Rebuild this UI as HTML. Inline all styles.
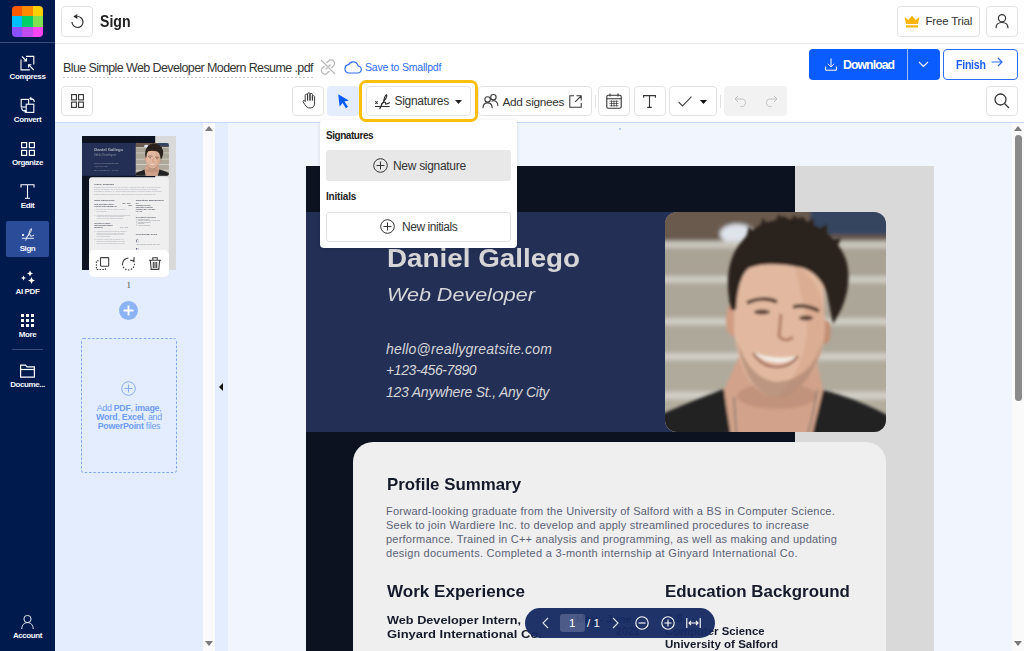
<!DOCTYPE html>
<html><head><meta charset="utf-8">
<style>
*{box-sizing:border-box;margin:0;padding:0}
html,body{width:1024px;height:651px;overflow:hidden;background:#fff;font-family:"Liberation Sans",sans-serif;position:relative}
.a{position:absolute}
.btn{position:absolute;border:1px solid #e3e3e3;border-radius:4px;background:#fff}
.ic{position:absolute;overflow:visible}
.sb-l{position:absolute;left:0;width:55px;text-align:center;color:#f4f6fb;font-size:8px;font-weight:bold;line-height:10px;white-space:nowrap;letter-spacing:-0.4px}
.t{position:absolute;white-space:nowrap}
.thumbpg .t{opacity:0.55}
.thumbpg .t[style*="bold"]{opacity:0.8}
</style></head><body>

<!-- SIDEBAR -->
<div class="a" style="left:0;top:0;width:55px;height:651px;background:#001a4d"></div>
<div class="a" style="left:0;top:42px;width:55px;height:1px;background:#3a4d78"></div>
<!-- logo -->
<div class="a" style="left:12px;top:6px;width:31px;height:31px;border-radius:4px;overflow:hidden;display:grid;grid-template-columns:10px 11px 10px;grid-template-rows:10px 11px 10px">
<i style="background:#ff5a00"></i><i style="background:#ff8a00"></i><i style="background:#ffd000"></i>
<i style="background:#00bfff"></i><i style="background:#00d068"></i><i style="background:#80e050"></i>
<i style="background:#8a50ff"></i><i style="background:#c04cf0"></i><i style="background:#ff44f4"></i>
</div>


<!-- compress -->
<svg class="ic" style="left:20px;top:55px" width="15" height="16" viewBox="0 0 15 16" fill="none" stroke="#fff" stroke-width="1.1">
<path d="M6 1.4H13.8V9.4"/><path d="M1 4.4V14.9H9.9"/><path d="M2 1.5L6.3 5.8M3.6 6H6.5V3.1"/><path d="M13.8 15L8.7 9.9M8.5 12.6V9.7H11.4"/>
</svg>
<div class="sb-l" style="top:72px">Compress</div>
<!-- convert -->
<svg class="ic" style="left:20px;top:96px" width="16" height="18" viewBox="0 0 16 18" fill="none" stroke="#fff" stroke-width="1.1">
<rect x="1.2" y="3.4" width="7.4" height="7.6"/><rect x="6.2" y="8.2" width="7.6" height="8.2" fill="#001a4d"/>
<path d="M11.2 1.2L10 2.6L11.4 3.8M10.2 2.6C12.5 2.6 14.3 3.5 14.3 6"/><path d="M4.8 16.6L6 15.2L4.6 14M5.8 15.2C3.5 15.2 1.7 14.3 1.7 11.8"/>
</svg>
<div class="sb-l" style="top:115px">Convert</div>
<!-- organize -->
<svg class="ic" style="left:21px;top:142px" width="14" height="14" viewBox="0 0 14 14" fill="none" stroke="#fff" stroke-width="1.2">
<rect x="0.6" y="0.6" width="5" height="5"/><rect x="8.4" y="0.6" width="5" height="5"/><rect x="0.6" y="8.4" width="5" height="5"/><rect x="8.4" y="8.4" width="5" height="5"/>
</svg>
<div class="sb-l" style="top:158px">Organize</div>
<!-- edit -->
<svg class="ic" style="left:20px;top:184px" width="15" height="15" viewBox="0 0 15 15" fill="none" stroke="#fff" stroke-width="1.1">
<path d="M1 3.5V0.8H14V3.5M7.5 0.8V14.2M5 14.2H10"/>
</svg>
<div class="sb-l" style="top:201px">Edit</div>
<!-- sign active -->
<div class="a" style="left:6px;top:221px;width:43px;height:36px;background:#2b4d99;border-radius:2px"></div>
<svg class="ic" style="left:21px;top:227.5px" width="14" height="14" viewBox="0 0 17 17" fill="none" stroke="#fff" stroke-width="1.1" stroke-linecap="round">
<path d="M1.5 12.5H15.2"/><path d="M1.6 7.6L3.4 9.4M3.4 7.6L1.6 9.4"/><path d="M9.6 7.2C10.3 4.2 11.3 1.2 12.2 0.8C13.3 0.4 13 3.5 10.6 6.2C8.8 8.3 7.2 11 5.8 14.8"/><path d="M7.6 10C9.2 7.8 12.2 7.3 11.6 9.4C11.2 10.6 12.6 10.2 15.5 8.8"/>
</svg>
<div class="sb-l" style="top:244px">Sign</div>
<!-- ai pdf -->
<svg class="ic" style="left:20px;top:270px" width="16" height="15" viewBox="0 0 16 15" fill="#fff">
<path d="M10 0.5L10.9 2.6L13 3.5L10.9 4.4L10 6.5L9.1 4.4L7 3.5L9.1 2.6Z"/>
<path d="M3.5 5.5L4.3 7.2L6 8L4.3 8.8L3.5 10.5L2.7 8.8L1 8L2.7 7.2Z"/>
<path d="M11.5 7L12.6 9.4L15 10.5L12.6 11.6L11.5 14L10.4 11.6L8 10.5L10.4 9.4Z"/>
</svg>
<div class="sb-l" style="top:287px">AI PDF</div>
<!-- more -->
<svg class="ic" style="left:21px;top:314px" width="13" height="13" viewBox="0 0 13 13" fill="#fff">
<rect x="0" y="0" width="3" height="3"/><rect x="5" y="0" width="3" height="3"/><rect x="10" y="0" width="3" height="3"/>
<rect x="0" y="5" width="3" height="3"/><rect x="5" y="5" width="3" height="3"/><rect x="10" y="5" width="3" height="3"/>
<rect x="0" y="10" width="3" height="3"/><rect x="5" y="10" width="3" height="3"/><rect x="10" y="10" width="3" height="3"/>
</svg>
<div class="sb-l" style="top:330px">More</div>
<div class="a" style="left:12px;top:349px;width:31px;height:1px;background:#3a4d78"></div>
<!-- documents -->
<svg class="ic" style="left:20px;top:364px" width="15" height="14" viewBox="0 0 15 14" fill="none" stroke="#fff" stroke-width="1.2">
<path d="M0.6 1.2H5.5L7 2.8H14.4V13.2H0.6Z"/><path d="M0.6 5.5H14.4"/>
</svg>
<div class="sb-l" style="top:380px;font-size:8px">Docume...</div>
<!-- account -->
<svg class="ic" style="left:20px;top:613px" width="15" height="16" viewBox="0 0 15 16" fill="none" stroke="#e6e9f0" stroke-width="1">
<circle cx="7.5" cy="6" r="3.6"/><path d="M1.8 16C1.8 12 4.2 9.6 7.5 9.6S13.2 12 13.2 16"/>
</svg>
<div class="sb-l" style="top:631px">Account</div>


<!-- HEADER -->
<div class="a" style="left:55px;top:43px;width:969px;height:1px;background:#e9e9e9"></div>
<div class="btn" style="left:61px;top:6px;width:32px;height:31px"></div>
<svg class="ic" style="left:69px;top:13px" width="16" height="16" viewBox="0 0 16 16" fill="none" stroke="#2a2a2a" stroke-width="1.2">
<path d="M8.3 3.5A5.5 5.5 0 1 1 3 9"/><path d="M4.3 3.5L8.3 1V6Z" fill="#2a2a2a" stroke="none"/>
</svg>
<div class="t" style="left:99.8px;top:12.2px;font-size:16.4px;font-weight:bold;color:#222;transform:scaleX(0.86);transform-origin:0 0">Sign</div>
<div class="btn" style="left:897px;top:6px;width:83px;height:31px"></div>
<svg class="ic" style="left:904px;top:15px" width="16" height="13" viewBox="0 0 16 13" fill="#f7b500">
<path d="M0.5 2L4.5 5L8 0.5L11.5 5L15.5 2L14 9H2Z"/><rect x="2" y="10.3" width="12" height="2.2"/>
</svg>
<div class="t" style="left:925.5px;top:15px;font-size:11.5px;color:#333;letter-spacing:-0.2px">Free Trial</div>
<div class="btn" style="left:986px;top:6px;width:32px;height:31px"></div>
<svg class="ic" style="left:995px;top:13px" width="14" height="16" viewBox="0 0 14 16" fill="none" stroke="#333" stroke-width="1.2">
<circle cx="7" cy="5.3" r="3.6"/><path d="M1 15.2C1 11.5 3.5 9.5 7 9.5S13 11.5 13 15.2"/>
</svg>

<!-- ROW 2 -->
<div class="t" style="left:63px;top:60.7px;font-size:12.5px;color:#333;letter-spacing:-0.6px">Blue Simple Web Developer Modern Resume .pdf</div>
<div class="a" style="left:63px;top:76.5px;width:250px;height:1.2px;background:repeating-linear-gradient(90deg,#c8c8c8 0 2px,transparent 2px 4px)"></div>
<svg class="ic" style="left:320px;top:59px" width="16" height="16" viewBox="0 0 16 16" fill="none" stroke="#b8b8b8" stroke-width="1.2">
<path d="M6.5 4L8.5 2A3 3 0 0 1 13.5 7L11.5 9M9.5 12L7.5 14A3 3 0 0 1 2.5 9L4.5 7M5.5 10.5L10.5 5.5M1 1L15 15"/>
</svg>
<svg class="ic" style="left:344px;top:60px" width="18" height="14" viewBox="0 0 18 14" fill="none" stroke="#2e6cf6" stroke-width="1.2">
<path d="M4.5 13H13.5A3.6 3.6 0 0 0 14 5.8A5 5 0 0 0 4.6 4.7A4.2 4.2 0 0 0 4.5 13Z"/>
</svg>
<div class="t" style="left:365px;top:61px;font-size:10.5px;color:#2e6cf6;letter-spacing:-0.2px">Save to Smallpdf</div>

<!-- download -->
<div class="a" style="left:809px;top:49px;width:131px;height:30.5px;background:#0b5cff;border-radius:4px"></div>
<div class="a" style="left:907px;top:49px;width:1px;height:30.5px;background:#9dbcff"></div>
<svg class="ic" style="left:824.5px;top:58px" width="12" height="13" viewBox="0 0 12 13" fill="none" stroke="#fff" stroke-width="1">
<path d="M6 0.5V9M2.8 5.8L6 9L9.2 5.8M0.6 8.5V12.2H11.4V8.5"/>
</svg>
<div class="t" style="left:843px;top:58px;font-size:12.3px;font-weight:bold;color:#fff;letter-spacing:-0.95px">Download</div>
<svg class="ic" style="left:918px;top:61px" width="11" height="7" viewBox="0 0 11 7" fill="none" stroke="#fff" stroke-width="1.1">
<path d="M1 1L5.5 5.5L10 1"/>
</svg>
<div class="a" style="left:943px;top:49px;width:75px;height:30.5px;border:1px solid #2e6cf6;border-radius:4px;background:#fff"></div>
<div class="t" style="left:956px;top:58px;font-size:12.3px;font-weight:bold;color:#1f5ef0;letter-spacing:-0.3px;transform:scaleX(0.86);transform-origin:0 0">Finish</div>
<svg class="ic" style="left:991px;top:57px" width="12" height="10" viewBox="0 0 12 10" fill="none" stroke="#2e6cf6" stroke-width="1.2">
<path d="M0.5 5H11M7 1L11 5L7 9"/>
</svg>

<!-- TOOLBAR -->
<div class="btn" style="left:61px;top:86px;width:32px;height:30px"></div>
<svg class="ic" style="left:71px;top:94px" width="13" height="14" viewBox="0 0 13 14" fill="none" stroke="#333" stroke-width="1.1">
<rect x="0.6" y="0.6" width="4.8" height="5.3"/><rect x="7.6" y="0.6" width="4.8" height="5.3"/><rect x="0.6" y="8.1" width="4.8" height="5.3"/><rect x="7.6" y="8.1" width="4.8" height="5.3"/>
</svg>

<div class="btn" style="left:292px;top:86px;width:32px;height:30px"></div>
<svg class="ic" style="left:301px;top:92px" width="15" height="17" viewBox="0 0 15 17" fill="none" stroke="#3a3a3a" stroke-width="1" stroke-linejoin="round">
<path d="M4.2 9.5V3.4A1.2 1.2 0 0 1 6.6 3.4V8.5M6.6 8.5V2A1.2 1.2 0 0 1 9 2V8.5M9 8.5V2.6A1.2 1.2 0 0 1 11.4 2.6V8.5M11.4 8.5V4.4A1.2 1.2 0 0 1 13.6 4.4V11C13.6 14.3 11.8 16 9.2 16C6.8 16 5.2 15 3.8 12.6L2 9.6A1 1 0 0 1 3.6 8.7L4.2 9.6"/>
</svg>
<div class="a" style="left:327px;top:86px;width:32px;height:30px;background:#e4edfd;border-radius:4px"></div>
<svg class="ic" style="left:337px;top:93px" width="13" height="16" viewBox="0 0 13 16" fill="#0b5cff">
<path d="M1.2 1.2L11.8 7.4L7.4 8.6L11 13.8L8.9 15.2L5.6 10.1L2.6 13.4Z"/>
</svg>

<div class="btn" style="left:366px;top:86px;width:105px;height:30px"></div>
<svg class="ic" style="left:374px;top:93px" width="17" height="17" viewBox="0 0 17 17" fill="none" stroke="#2a2a2a" stroke-width="1.1" stroke-linecap="round">
<path d="M1.5 13.5H15.2"/><path d="M1.6 8.6L3.4 10.4M3.4 8.6L1.6 10.4"/><path d="M9.6 8.2C10.3 5.2 11.3 2.2 12.2 1.8C13.3 1.4 13 4.5 10.6 7.2C8.8 9.3 7.2 12 5.8 15.8"/><path d="M7.6 11C9.2 8.8 12.2 8.3 11.6 10.4C11.2 11.6 12.6 11.2 15.5 9.8"/>
</svg>
<div class="t" style="left:394.5px;top:94px;font-size:12px;color:#333;letter-spacing:-0.3px">Signatures</div>
<svg class="ic" style="left:454.5px;top:99.5px" width="7" height="4" viewBox="0 0 7 4" fill="#222"><path d="M0 0H7L3.5 4Z"/></svg>

<div class="btn" style="left:478px;top:86px;width:114px;height:30px"></div>
<svg class="ic" style="left:482px;top:93px" width="17" height="16" viewBox="0 0 17 16" fill="none" stroke="#3a3a3a" stroke-width="1.1">
<circle cx="5.6" cy="6.4" r="2.7"/><circle cx="11.4" cy="4.2" r="2.7"/><path d="M1 15.2C1 11.6 2.8 9.9 5.6 9.9S10.2 11.6 10.2 15.2M9.6 8.2C10.1 7.9 10.7 7.7 11.4 7.7C14.2 7.7 15.9 9.6 15.9 13"/>
</svg>
<div class="t" style="left:502.5px;top:94.5px;font-size:11.8px;color:#333;letter-spacing:-0.3px">Add signees</div>
<svg class="ic" style="left:569px;top:95px" width="13" height="13" viewBox="0 0 13 13" fill="none" stroke="#3a3a3a" stroke-width="1.1">
<path d="M5 0.8H0.8V12.2H12.2V8M7.5 0.8H12.2V5.5M12.2 0.8L6.2 6.8"/>
</svg>
<div class="a" style="left:595px;top:95px;width:1px;height:13px;background:#e3e3e3"></div>
<div class="btn" style="left:598px;top:86px;width:32px;height:30px"></div>
<svg class="ic" style="left:606px;top:93px" width="16" height="16" viewBox="0 0 16 16" fill="none" stroke="#333" stroke-width="1.1">
<rect x="0.8" y="2.3" width="14.4" height="12.9" rx="1.5"/><path d="M0.8 5.8H15.2M4 0.5V3.5M12 0.5V3.5"/>
<path d="M3.5 8.3H12.5M3.5 10.5H12.5M3.5 12.7H12.5M5.5 7.5V13.5M8 7.5V13.5M10.5 7.5V13.5" stroke-width="0.7"/>
</svg>
<div class="btn" style="left:634px;top:86px;width:32px;height:30px"></div>
<svg class="ic" style="left:643px;top:95px" width="13" height="13" viewBox="0 0 13 13" fill="none" stroke="#333" stroke-width="1.1">
<path d="M0.6 2.8V0.6H12.4V2.8M6.5 0.6V12.4M4.2 12.4H8.8"/>
</svg>
<div class="btn" style="left:669px;top:86px;width:48px;height:30px"></div>
<svg class="ic" style="left:677.5px;top:95.5px" width="14" height="11" viewBox="0 0 14 11" fill="none" stroke="#444" stroke-width="1.1">
<path d="M0.6 6L4.5 10L13.5 0.6"/>
</svg>
<svg class="ic" style="left:700px;top:99.5px" width="7" height="4" viewBox="0 0 7 4" fill="#111"><path d="M0 0H7L3.5 4Z"/></svg>
<div class="a" style="left:720px;top:95px;width:1px;height:13px;background:#e3e3e3"></div>
<div class="a" style="left:724px;top:86px;width:63px;height:30px;background:#f2f2f2;border-radius:4px"></div>
<svg class="ic" style="left:733.5px;top:95px" width="14" height="12" viewBox="0 0 14 12" fill="none" stroke="#c2c2c2" stroke-width="1">
<path d="M1 4H9A4 4 0 0 1 9 11.5H6.5M4 1L1 4L4 7"/>
</svg>
<svg class="ic" style="left:764px;top:95px" width="14" height="12" viewBox="0 0 14 12" fill="none" stroke="#c2c2c2" stroke-width="1">
<path d="M13 4H5A4 4 0 0 0 5 11.5H7.5M10 1L13 4L10 7"/>
</svg>
<div class="btn" style="left:986px;top:86px;width:32px;height:30px"></div>
<svg class="ic" style="left:994px;top:93px" width="16" height="16" viewBox="0 0 16 16" fill="none" stroke="#333" stroke-width="1.3">
<circle cx="6.5" cy="6.5" r="5.5"/><path d="M10.5 10.5L15 15"/>
</svg>


<!-- CONTENT -->
<div class="a" style="left:55px;top:122px;width:969px;height:529px;background:#f0f5fe"></div>
<div class="a" style="left:55px;top:122px;width:969px;height:1px;background:#c8daf9"></div>
<div class="a" style="left:55px;top:123px;width:148px;height:528px;background:#e3edfd"></div>
<div class="a" style="left:203px;top:123px;width:12px;height:528px;background:#fafafa"></div>
<svg class="ic" style="left:205px;top:126px" width="8" height="5" viewBox="0 0 8 5" fill="#7a7a7a"><path d="M0 5H8L4 0Z"/></svg>
<svg class="ic" style="left:205px;top:641px" width="8" height="5" viewBox="0 0 8 5" fill="#7a7a7a"><path d="M0 0H8L4 5Z"/></svg>
<div class="a" style="left:215px;top:123px;width:13px;height:528px;background:#e3edfd"></div>
<svg class="ic" style="left:219px;top:383px" width="4" height="8" viewBox="0 0 4 8" fill="#111"><path d="M4 0V8L0 4Z"/></svg>
<!-- right scrollbar -->
<div class="a" style="left:1012px;top:123px;width:12px;height:528px;background:#fafafa"></div>
<svg class="ic" style="left:1014px;top:126px" width="8" height="5" viewBox="0 0 8 5" fill="#7a7a7a"><path d="M0 5H8L4 0Z"/></svg>
<svg class="ic" style="left:1014px;top:641px" width="8" height="5" viewBox="0 0 8 5" fill="#7a7a7a"><path d="M0 0H8L4 5Z"/></svg>
<div class="a" style="left:1015px;top:135px;width:7px;height:266px;background:#8a8a8a;border-radius:4px"></div>


<!-- DOCUMENT -->
<div class="a" style="left:227px;top:123px;width:785px;height:528px;overflow:hidden">
<div class="a" style="left:79px;top:43px;width:628px;height:895px">
<div class="a" style="left:0;top:0;width:628px;height:895px;background:#d9d9d9"></div><div class="a" style="left:0;top:0;width:489px;height:895px;background:#0d1220"></div><div class="a" style="left:0;top:46px;width:489px;height:220px;background:#232f55"></div><svg class="a" style="left:359px;top:46px" width="221" height="220" viewBox="0 0 221 220">
<defs>
<clipPath id="pcm"><rect x="0" y="0" width="221" height="220" rx="12"/></clipPath>
<filter id="blm" x="-10%" y="-10%" width="120%" height="120%"><feGaussianBlur stdDeviation="2.2"/></filter>
<filter id="bsm" x="-10%" y="-10%" width="120%" height="120%"><feGaussianBlur stdDeviation="1.4"/></filter>
</defs>
<g clip-path="url(#pcm)">
<rect width="221" height="220" fill="#aaa496"/>
<g filter="url(#blm)">
<rect x="-5" y="-5" width="231" height="34" fill="#6a5a4e"/>
<rect x="145" y="-5" width="85" height="28" fill="#34445f"/>
<ellipse cx="72" cy="22" rx="17" ry="10" fill="#dfe3ea"/>
<rect x="-5" y="29" width="231" height="7" fill="#c9c6bd"/>
<rect x="-5" y="36" width="231" height="28" fill="#a9a395"/>
<rect x="-5" y="64" width="231" height="7" fill="#cecbc3"/>
<rect x="-5" y="71" width="231" height="35" fill="#aca698"/>
<rect x="-5" y="106" width="231" height="7" fill="#d0cdc5"/>
<rect x="-5" y="113" width="231" height="28" fill="#aea89a"/>
<rect x="-5" y="141" width="231" height="7" fill="#d1cec6"/>
<rect x="-5" y="148" width="231" height="32" fill="#b0aa9c"/>
<rect x="-5" y="180" width="231" height="7" fill="#d2cfc7"/>
<rect x="-5" y="187" width="231" height="40" fill="#b3ad9f"/>
</g>
<g filter="url(#bsm)">
<!-- neck -->
<path d="M76 140 L150 140 L158 178 L150 225 L64 225 L59 178 Z" fill="#d2a38a"/>
<ellipse cx="112" cy="184" rx="40" ry="13" fill="#b08068" opacity="0.45"/>
<!-- shirt -->
<path d="M-5 203 C10 196 40 184 59 177 C61 195 64 210 66 225 L147 225 C150 210 155 192 158 178 C170 181 200 190 226 205 L226 228 L-5 228 Z" fill="#232323"/>
<!-- necklace -->
<path d="M69 185 C70 200 70 212 72 225M152 178 C150 195 146 210 142 225" stroke="#6a6a6a" stroke-width="1.2" fill="none"/>
<!-- ears -->
<ellipse cx="67" cy="108" rx="6" ry="16" fill="#d09c82"/>
<ellipse cx="160" cy="120" rx="6" ry="12" fill="#c28e74"/>
<!-- face -->
<path d="M70 62 C75 45 150 45 158 65 L160 112 C160 145 145 178 112 186 C85 184 72 150 69 118 Z" fill="#e2b9a0"/>
<path d="M130 55 C150 62 160 85 160 115 C158 150 142 180 112 186 C132 165 142 140 142 110 Z" fill="#c99378" opacity="0.3"/>
<!-- stubble -->
<path d="M72 128 C78 165 95 186 112 186 C135 183 152 160 158 128 C150 155 135 168 112 170 C92 168 80 152 72 128 Z" fill="#a37e6b" opacity="0.6"/>
<!-- hair -->
<path d="M66 98 C60 70 62 45 78 28 C88 15 100 10 112 8 L118 4 L126 8 L138 5 L144 12 C160 16 172 28 180 45 C186 60 184 80 176 98 L168 112 L162 82 C158 70 150 60 138 56 C120 52 100 50 84 56 C76 62 72 78 71 98 Z" fill="#2c201a"/>
<path d="M80 30L84 14L92 24L98 6L106 18L114 2L120 14L130 3L136 16L148 6L150 20L162 12L162 28L176 26L170 40Z" fill="#2c201a"/>
<!-- brows -->
<path d="M82 91 C92 86 104 86 112 90" stroke="#4a3428" stroke-width="3.5" fill="none"/>
<path d="M128 95 C136 93 146 95 154 99" stroke="#4a3428" stroke-width="3.5" fill="none"/>
<!-- eyes -->
<ellipse cx="97" cy="100" rx="8" ry="2.5" fill="#5a3e30"/>
<ellipse cx="141" cy="106" rx="7" ry="2.5" fill="#5a3e30"/>
<!-- nose -->
<path d="M116 102 L114 124 C117 129 124 129 128 125" stroke="#b07c62" stroke-width="3" fill="none"/>
<!-- mouth -->
<path d="M88 140 C100 152 122 154 132 144 C120 147 100 146 88 140 Z" fill="#f3eee8"/>
<path d="M88 141 C98 158 122 160 133 144" stroke="#8a5040" stroke-width="2" fill="none"/>
</g>
</g>
</svg><div class="t" style="left:81px;top:80.41px;font-size:25.5px;line-height:1;font-weight:bold;font-style:normal;color:#d6d6d9;letter-spacing:0px;transform:scaleX(1.09);transform-origin:0 0;">Daniel Gallego</div>
<div class="t" style="left:81px;top:118.92px;font-size:19px;line-height:1;font-weight:normal;font-style:italic;color:#d6d6d9;letter-spacing:0px;transform:scaleX(1.133);transform-origin:0 0;">Web Developer</div>
<div class="t" style="left:80px;top:176.15px;font-size:14px;line-height:1;font-weight:normal;font-style:italic;color:#d6d6d9;letter-spacing:0.19px;">hello@reallygreatsite.com</div>
<div class="t" style="left:80px;top:197.45px;font-size:14px;line-height:1;font-weight:normal;font-style:italic;color:#d6d6d9;letter-spacing:-0.4px;">+123-456-7890</div>
<div class="t" style="left:80px;top:218.95px;font-size:14px;line-height:1;font-weight:normal;font-style:italic;color:#d6d6d9;letter-spacing:-0.24px;">123 Anywhere St., Any City</div>
<div class="a" style="left:47px;top:276px;width:533px;height:640px;background:#efefef;border-radius:20px"></div><div class="t" style="left:81px;top:310.03px;font-size:16.5px;line-height:1;font-weight:bold;font-style:normal;color:#151a2a;letter-spacing:0px;transform:scaleX(1.022);transform-origin:0 0;">Profile Summary</div>
<div class="t" style="left:80px;top:340.09px;font-size:11px;line-height:1;font-weight:normal;font-style:normal;color:#5b6275;letter-spacing:0.245px;">Forward-looking graduate from the University of Salford with a BS in Computer Science.</div>
<div class="t" style="left:80px;top:353.99px;font-size:11px;line-height:1;font-weight:normal;font-style:normal;color:#5b6275;letter-spacing:0.22px;">Seek to join Wardiere Inc. to develop and apply streamlined procedures to increase</div>
<div class="t" style="left:80px;top:367.89px;font-size:11px;line-height:1;font-weight:normal;font-style:normal;color:#5b6275;letter-spacing:0.23px;">performance. Trained in C++ analysis and programming, as well as making and updating</div>
<div class="t" style="left:80px;top:381.79px;font-size:11px;line-height:1;font-weight:normal;font-style:normal;color:#5b6275;letter-spacing:0.29px;">design documents. Completed a 3-month internship at Ginyard International Co.</div>
<div class="t" style="left:81px;top:417.03px;font-size:16.5px;line-height:1;font-weight:bold;font-style:normal;color:#151a2a;letter-spacing:0px;transform:scaleX(1.033);transform-origin:0 0;">Work Experience</div>
<div class="t" style="left:359px;top:417.03px;font-size:16.5px;line-height:1;font-weight:bold;font-style:normal;color:#151a2a;letter-spacing:0px;transform:scaleX(1.024);transform-origin:0 0;">Education Background</div>
<div class="t" style="left:81px;top:449.23px;font-size:11.3px;line-height:1;font-weight:bold;font-style:normal;color:#151a2a;letter-spacing:0px;transform:scaleX(1.125);transform-origin:0 0;">Web Developer Intern,</div>
<div class="t" style="left:81px;top:462.93px;font-size:11.3px;line-height:1;font-weight:bold;font-style:normal;color:#151a2a;letter-spacing:0px;transform:scaleX(1.148);transform-origin:0 0;">Ginyard International Co.</div>
<div class="t" style="left:270px;top:448.11px;font-size:10.5px;line-height:1;font-weight:bold;font-style:normal;color:#151a2a;letter-spacing:0px;transform:scaleX(1.02);transform-origin:0 0;">May - June</div>
<div class="t" style="left:309.5px;top:459.61px;font-size:10.5px;line-height:1;font-weight:bold;font-style:normal;color:#151a2a;letter-spacing:0px;transform:scaleX(1.02);transform-origin:0 0;">2021</div>
<div class="t" style="left:359px;top:447.11px;font-size:10.5px;line-height:1;font-weight:bold;font-style:normal;color:#151a2a;letter-spacing:0.3px;">B.S.</div>
<div class="t" style="left:359px;top:459.99px;font-size:11px;line-height:1;font-weight:bold;font-style:normal;color:#151a2a;letter-spacing:0px;transform:scaleX(1.03);transform-origin:0 0;">Computer Science</div>
<div class="t" style="left:359px;top:472.89px;font-size:11px;line-height:1;font-weight:bold;font-style:normal;color:#151a2a;letter-spacing:0px;transform:scaleX(1.05);transform-origin:0 0;">University of Salford</div>
<div class="t" style="left:359px;top:487.54px;font-size:10px;line-height:1;font-weight:bold;font-style:normal;color:#151a2a;letter-spacing:0px;">September 2017 - May 2021</div>
<div class="t" style="left:359px;top:499.54px;font-size:10px;line-height:1;font-weight:bold;font-style:normal;color:#151a2a;letter-spacing:0px;">GPA: 3.8</div>
<div class="a" style="left:85px;top:492px;width:4px;height:4px;border-radius:50%;background:#5b6275"></div><div class="t" style="left:97px;top:488.96px;font-size:9.5px;line-height:1;font-weight:normal;font-style:normal;color:#5b6275;letter-spacing:0px;">Developed and tested 10 features of customer</div>
<div class="t" style="left:97px;top:500.96px;font-size:9.5px;line-height:1;font-weight:normal;font-style:normal;color:#5b6275;letter-spacing:0px;">web applications</div>
<div class="a" style="left:85px;top:527px;width:4px;height:4px;border-radius:50%;background:#5b6275"></div><div class="t" style="left:97px;top:523.96px;font-size:9.5px;line-height:1;font-weight:normal;font-style:normal;color:#5b6275;letter-spacing:0px;">Collaborated with the development and design teams</div>
<div class="t" style="left:97px;top:535.96px;font-size:9.5px;line-height:1;font-weight:normal;font-style:normal;color:#5b6275;letter-spacing:0px;">to build efficient user interfaces and improve</div>
<div class="t" style="left:97px;top:547.96px;font-size:9.5px;line-height:1;font-weight:normal;font-style:normal;color:#5b6275;letter-spacing:0px;">experience for better website performance</div>
<div class="t" style="left:81px;top:580.69px;font-size:11px;line-height:1;font-weight:bold;font-style:normal;color:#151a2a;letter-spacing:0px;">University of Salford</div>
<div class="t" style="left:81px;top:592.69px;font-size:11px;line-height:1;font-weight:bold;font-style:normal;color:#151a2a;letter-spacing:0px;">Undergraduate Student</div>
<div class="t" style="left:81px;top:604.69px;font-size:11px;line-height:1;font-weight:bold;font-style:normal;color:#151a2a;letter-spacing:0px;">Researcher</div>
<div class="t" style="left:255px;top:605.53px;font-size:10px;line-height:1;font-weight:normal;font-style:normal;color:#151a2a;letter-spacing:0px;">2019 - 2020</div>
<div class="a" style="left:85px;top:635px;width:4px;height:4px;border-radius:50%;background:#5b6275"></div><div class="t" style="left:97px;top:631.96px;font-size:9.5px;line-height:1;font-weight:normal;font-style:normal;color:#5b6275;letter-spacing:0px;">Assisted professors with conducting research on</div>
<div class="t" style="left:97px;top:643.96px;font-size:9.5px;line-height:1;font-weight:normal;font-style:normal;color:#5b6275;letter-spacing:0px;">customer experience, developing data-driven</div>
<div class="t" style="left:97px;top:655.96px;font-size:9.5px;line-height:1;font-weight:normal;font-style:normal;color:#5b6275;letter-spacing:0px;">programs, and producing reports for faculty</div>
<div class="t" style="left:97px;top:667.96px;font-size:9.5px;line-height:1;font-weight:normal;font-style:normal;color:#5b6275;letter-spacing:0px;">review and publication</div>
<div class="a" style="left:85px;top:690px;width:4px;height:4px;border-radius:50%;background:#5b6275"></div><div class="t" style="left:97px;top:686.96px;font-size:9.5px;line-height:1;font-weight:normal;font-style:normal;color:#5b6275;letter-spacing:0px;">Conducted research and data analysis for a</div>
<div class="t" style="left:97px;top:698.96px;font-size:9.5px;line-height:1;font-weight:normal;font-style:normal;color:#5b6275;letter-spacing:0px;">team project, presenting findings to the class</div>
<div class="t" style="left:97px;top:710.96px;font-size:9.5px;line-height:1;font-weight:normal;font-style:normal;color:#5b6275;letter-spacing:0px;">and receiving the highest grade in the course</div>
<div class="t" style="left:359px;top:534.30px;font-size:15px;line-height:1;font-weight:bold;font-style:normal;color:#151a2a;letter-spacing:0.5px;">Relevant Courses</div>
<div class="a" style="left:364px;top:556px;width:3px;height:3px;border-radius:50%;background:#151a2a"></div><div class="t" style="left:372px;top:552.96px;font-size:9.5px;line-height:1;font-weight:normal;font-style:normal;color:#151a2a;letter-spacing:0px;">Web Development</div>
<div class="a" style="left:364px;top:566px;width:3px;height:3px;border-radius:50%;background:#151a2a"></div><div class="t" style="left:372px;top:562.96px;font-size:9.5px;line-height:1;font-weight:normal;font-style:normal;color:#151a2a;letter-spacing:0px;">Database Design and Management</div>
<div class="a" style="left:364px;top:576px;width:3px;height:3px;border-radius:50%;background:#151a2a"></div><div class="t" style="left:372px;top:572.96px;font-size:9.5px;line-height:1;font-weight:normal;font-style:normal;color:#151a2a;letter-spacing:0px;">Algorithms and Data</div>
<div class="a" style="left:364px;top:586px;width:3px;height:3px;border-radius:50%;background:#151a2a"></div><div class="t" style="left:372px;top:582.96px;font-size:9.5px;line-height:1;font-weight:normal;font-style:normal;color:#151a2a;letter-spacing:0px;">Structures</div>
<div class="a" style="left:364px;top:596px;width:3px;height:3px;border-radius:50%;background:#151a2a"></div><div class="t" style="left:372px;top:592.96px;font-size:9.5px;line-height:1;font-weight:normal;font-style:normal;color:#151a2a;letter-spacing:0px;">Artificial Intelligence</div>
<div class="t" style="left:359px;top:649.30px;font-size:15px;line-height:1;font-weight:bold;font-style:normal;color:#151a2a;letter-spacing:0.5px;">Professional Skills</div>
<div class="a" style="left:359px;top:690px;width:22px;height:22px;border-radius:50%;border:4px solid #232f55;border-right-color:#c9ccd6"></div><div class="t" style="left:359px;top:722.96px;font-size:9.5px;line-height:1;font-weight:normal;font-style:normal;color:#151a2a;letter-spacing:0px;">Adobe Illustrator   Microsoft Office Suite</div>
<div class="a" style="left:359px;top:745px;width:22px;height:22px;border-radius:50%;border:4px solid #232f55;border-right-color:#c9ccd6"></div>
</div>
</div>
<!-- THUMB -->
<div class="a" style="left:82px;top:136px;width:94px;height:134px;overflow:hidden">
<div class="a thumbpg" style="left:0;top:0;width:628px;height:895px;transform:scale(0.1497);transform-origin:0 0">
<div class="a" style="left:0;top:0;width:628px;height:895px;background:#d9d9d9"></div><div class="a" style="left:0;top:0;width:489px;height:895px;background:#0d1220"></div><div class="a" style="left:0;top:46px;width:489px;height:220px;background:#232f55"></div><svg class="a" style="left:359px;top:46px" width="221" height="220" viewBox="0 0 221 220">
<defs>
<clipPath id="pct"><rect x="0" y="0" width="221" height="220" rx="12"/></clipPath>
<filter id="blt" x="-10%" y="-10%" width="120%" height="120%"><feGaussianBlur stdDeviation="2.2"/></filter>
<filter id="bst" x="-10%" y="-10%" width="120%" height="120%"><feGaussianBlur stdDeviation="1.4"/></filter>
</defs>
<g clip-path="url(#pct)">
<rect width="221" height="220" fill="#aaa496"/>
<g filter="url(#blt)">
<rect x="-5" y="-5" width="231" height="34" fill="#6a5a4e"/>
<rect x="145" y="-5" width="85" height="28" fill="#34445f"/>
<ellipse cx="72" cy="22" rx="17" ry="10" fill="#dfe3ea"/>
<rect x="-5" y="29" width="231" height="7" fill="#c9c6bd"/>
<rect x="-5" y="36" width="231" height="28" fill="#a9a395"/>
<rect x="-5" y="64" width="231" height="7" fill="#cecbc3"/>
<rect x="-5" y="71" width="231" height="35" fill="#aca698"/>
<rect x="-5" y="106" width="231" height="7" fill="#d0cdc5"/>
<rect x="-5" y="113" width="231" height="28" fill="#aea89a"/>
<rect x="-5" y="141" width="231" height="7" fill="#d1cec6"/>
<rect x="-5" y="148" width="231" height="32" fill="#b0aa9c"/>
<rect x="-5" y="180" width="231" height="7" fill="#d2cfc7"/>
<rect x="-5" y="187" width="231" height="40" fill="#b3ad9f"/>
</g>
<g filter="url(#bst)">
<!-- neck -->
<path d="M76 140 L150 140 L158 178 L150 225 L64 225 L59 178 Z" fill="#d2a38a"/>
<ellipse cx="112" cy="184" rx="40" ry="13" fill="#b08068" opacity="0.45"/>
<!-- shirt -->
<path d="M-5 203 C10 196 40 184 59 177 C61 195 64 210 66 225 L147 225 C150 210 155 192 158 178 C170 181 200 190 226 205 L226 228 L-5 228 Z" fill="#232323"/>
<!-- necklace -->
<path d="M69 185 C70 200 70 212 72 225M152 178 C150 195 146 210 142 225" stroke="#6a6a6a" stroke-width="1.2" fill="none"/>
<!-- ears -->
<ellipse cx="67" cy="108" rx="6" ry="16" fill="#d09c82"/>
<ellipse cx="160" cy="120" rx="6" ry="12" fill="#c28e74"/>
<!-- face -->
<path d="M70 62 C75 45 150 45 158 65 L160 112 C160 145 145 178 112 186 C85 184 72 150 69 118 Z" fill="#e2b9a0"/>
<path d="M130 55 C150 62 160 85 160 115 C158 150 142 180 112 186 C132 165 142 140 142 110 Z" fill="#c99378" opacity="0.3"/>
<!-- stubble -->
<path d="M72 128 C78 165 95 186 112 186 C135 183 152 160 158 128 C150 155 135 168 112 170 C92 168 80 152 72 128 Z" fill="#a37e6b" opacity="0.6"/>
<!-- hair -->
<path d="M66 98 C60 70 62 45 78 28 C88 15 100 10 112 8 L118 4 L126 8 L138 5 L144 12 C160 16 172 28 180 45 C186 60 184 80 176 98 L168 112 L162 82 C158 70 150 60 138 56 C120 52 100 50 84 56 C76 62 72 78 71 98 Z" fill="#2c201a"/>
<path d="M80 30L84 14L92 24L98 6L106 18L114 2L120 14L130 3L136 16L148 6L150 20L162 12L162 28L176 26L170 40Z" fill="#2c201a"/>
<!-- brows -->
<path d="M82 91 C92 86 104 86 112 90" stroke="#4a3428" stroke-width="3.5" fill="none"/>
<path d="M128 95 C136 93 146 95 154 99" stroke="#4a3428" stroke-width="3.5" fill="none"/>
<!-- eyes -->
<ellipse cx="97" cy="100" rx="8" ry="2.5" fill="#5a3e30"/>
<ellipse cx="141" cy="106" rx="7" ry="2.5" fill="#5a3e30"/>
<!-- nose -->
<path d="M116 102 L114 124 C117 129 124 129 128 125" stroke="#b07c62" stroke-width="3" fill="none"/>
<!-- mouth -->
<path d="M88 140 C100 152 122 154 132 144 C120 147 100 146 88 140 Z" fill="#f3eee8"/>
<path d="M88 141 C98 158 122 160 133 144" stroke="#8a5040" stroke-width="2" fill="none"/>
</g>
</g>
</svg><div class="t" style="left:81px;top:80.41px;font-size:25.5px;line-height:1;font-weight:bold;font-style:normal;color:#d6d6d9;letter-spacing:0px;transform:scaleX(1.09);transform-origin:0 0;">Daniel Gallego</div>
<div class="t" style="left:81px;top:118.92px;font-size:19px;line-height:1;font-weight:normal;font-style:italic;color:#d6d6d9;letter-spacing:0px;transform:scaleX(1.133);transform-origin:0 0;">Web Developer</div>
<div class="t" style="left:80px;top:176.15px;font-size:14px;line-height:1;font-weight:normal;font-style:italic;color:#d6d6d9;letter-spacing:0.19px;">hello@reallygreatsite.com</div>
<div class="t" style="left:80px;top:197.45px;font-size:14px;line-height:1;font-weight:normal;font-style:italic;color:#d6d6d9;letter-spacing:-0.4px;">+123-456-7890</div>
<div class="t" style="left:80px;top:218.95px;font-size:14px;line-height:1;font-weight:normal;font-style:italic;color:#d6d6d9;letter-spacing:-0.24px;">123 Anywhere St., Any City</div>
<div class="a" style="left:47px;top:276px;width:533px;height:640px;background:#efefef;border-radius:20px"></div><div class="t" style="left:81px;top:310.03px;font-size:16.5px;line-height:1;font-weight:bold;font-style:normal;color:#151a2a;letter-spacing:0px;transform:scaleX(1.022);transform-origin:0 0;">Profile Summary</div>
<div class="t" style="left:80px;top:340.09px;font-size:11px;line-height:1;font-weight:normal;font-style:normal;color:#5b6275;letter-spacing:0.245px;">Forward-looking graduate from the University of Salford with a BS in Computer Science.</div>
<div class="t" style="left:80px;top:353.99px;font-size:11px;line-height:1;font-weight:normal;font-style:normal;color:#5b6275;letter-spacing:0.22px;">Seek to join Wardiere Inc. to develop and apply streamlined procedures to increase</div>
<div class="t" style="left:80px;top:367.89px;font-size:11px;line-height:1;font-weight:normal;font-style:normal;color:#5b6275;letter-spacing:0.23px;">performance. Trained in C++ analysis and programming, as well as making and updating</div>
<div class="t" style="left:80px;top:381.79px;font-size:11px;line-height:1;font-weight:normal;font-style:normal;color:#5b6275;letter-spacing:0.29px;">design documents. Completed a 3-month internship at Ginyard International Co.</div>
<div class="t" style="left:81px;top:417.03px;font-size:16.5px;line-height:1;font-weight:bold;font-style:normal;color:#151a2a;letter-spacing:0px;transform:scaleX(1.033);transform-origin:0 0;">Work Experience</div>
<div class="t" style="left:359px;top:417.03px;font-size:16.5px;line-height:1;font-weight:bold;font-style:normal;color:#151a2a;letter-spacing:0px;transform:scaleX(1.024);transform-origin:0 0;">Education Background</div>
<div class="t" style="left:81px;top:449.23px;font-size:11.3px;line-height:1;font-weight:bold;font-style:normal;color:#151a2a;letter-spacing:0px;transform:scaleX(1.125);transform-origin:0 0;">Web Developer Intern,</div>
<div class="t" style="left:81px;top:462.93px;font-size:11.3px;line-height:1;font-weight:bold;font-style:normal;color:#151a2a;letter-spacing:0px;transform:scaleX(1.148);transform-origin:0 0;">Ginyard International Co.</div>
<div class="t" style="left:270px;top:448.11px;font-size:10.5px;line-height:1;font-weight:bold;font-style:normal;color:#151a2a;letter-spacing:0px;transform:scaleX(1.02);transform-origin:0 0;">May - June</div>
<div class="t" style="left:309.5px;top:459.61px;font-size:10.5px;line-height:1;font-weight:bold;font-style:normal;color:#151a2a;letter-spacing:0px;transform:scaleX(1.02);transform-origin:0 0;">2021</div>
<div class="t" style="left:359px;top:447.11px;font-size:10.5px;line-height:1;font-weight:bold;font-style:normal;color:#151a2a;letter-spacing:0.3px;">B.S.</div>
<div class="t" style="left:359px;top:459.99px;font-size:11px;line-height:1;font-weight:bold;font-style:normal;color:#151a2a;letter-spacing:0px;transform:scaleX(1.03);transform-origin:0 0;">Computer Science</div>
<div class="t" style="left:359px;top:472.89px;font-size:11px;line-height:1;font-weight:bold;font-style:normal;color:#151a2a;letter-spacing:0px;transform:scaleX(1.05);transform-origin:0 0;">University of Salford</div>
<div class="t" style="left:359px;top:487.54px;font-size:10px;line-height:1;font-weight:bold;font-style:normal;color:#151a2a;letter-spacing:0px;">September 2017 - May 2021</div>
<div class="t" style="left:359px;top:499.54px;font-size:10px;line-height:1;font-weight:bold;font-style:normal;color:#151a2a;letter-spacing:0px;">GPA: 3.8</div>
<div class="a" style="left:85px;top:492px;width:4px;height:4px;border-radius:50%;background:#5b6275"></div><div class="t" style="left:97px;top:488.96px;font-size:9.5px;line-height:1;font-weight:normal;font-style:normal;color:#5b6275;letter-spacing:0px;">Developed and tested 10 features of customer</div>
<div class="t" style="left:97px;top:500.96px;font-size:9.5px;line-height:1;font-weight:normal;font-style:normal;color:#5b6275;letter-spacing:0px;">web applications</div>
<div class="a" style="left:85px;top:527px;width:4px;height:4px;border-radius:50%;background:#5b6275"></div><div class="t" style="left:97px;top:523.96px;font-size:9.5px;line-height:1;font-weight:normal;font-style:normal;color:#5b6275;letter-spacing:0px;">Collaborated with the development and design teams</div>
<div class="t" style="left:97px;top:535.96px;font-size:9.5px;line-height:1;font-weight:normal;font-style:normal;color:#5b6275;letter-spacing:0px;">to build efficient user interfaces and improve</div>
<div class="t" style="left:97px;top:547.96px;font-size:9.5px;line-height:1;font-weight:normal;font-style:normal;color:#5b6275;letter-spacing:0px;">experience for better website performance</div>
<div class="t" style="left:81px;top:580.69px;font-size:11px;line-height:1;font-weight:bold;font-style:normal;color:#151a2a;letter-spacing:0px;">University of Salford</div>
<div class="t" style="left:81px;top:592.69px;font-size:11px;line-height:1;font-weight:bold;font-style:normal;color:#151a2a;letter-spacing:0px;">Undergraduate Student</div>
<div class="t" style="left:81px;top:604.69px;font-size:11px;line-height:1;font-weight:bold;font-style:normal;color:#151a2a;letter-spacing:0px;">Researcher</div>
<div class="t" style="left:255px;top:605.53px;font-size:10px;line-height:1;font-weight:normal;font-style:normal;color:#151a2a;letter-spacing:0px;">2019 - 2020</div>
<div class="a" style="left:85px;top:635px;width:4px;height:4px;border-radius:50%;background:#5b6275"></div><div class="t" style="left:97px;top:631.96px;font-size:9.5px;line-height:1;font-weight:normal;font-style:normal;color:#5b6275;letter-spacing:0px;">Assisted professors with conducting research on</div>
<div class="t" style="left:97px;top:643.96px;font-size:9.5px;line-height:1;font-weight:normal;font-style:normal;color:#5b6275;letter-spacing:0px;">customer experience, developing data-driven</div>
<div class="t" style="left:97px;top:655.96px;font-size:9.5px;line-height:1;font-weight:normal;font-style:normal;color:#5b6275;letter-spacing:0px;">programs, and producing reports for faculty</div>
<div class="t" style="left:97px;top:667.96px;font-size:9.5px;line-height:1;font-weight:normal;font-style:normal;color:#5b6275;letter-spacing:0px;">review and publication</div>
<div class="a" style="left:85px;top:690px;width:4px;height:4px;border-radius:50%;background:#5b6275"></div><div class="t" style="left:97px;top:686.96px;font-size:9.5px;line-height:1;font-weight:normal;font-style:normal;color:#5b6275;letter-spacing:0px;">Conducted research and data analysis for a</div>
<div class="t" style="left:97px;top:698.96px;font-size:9.5px;line-height:1;font-weight:normal;font-style:normal;color:#5b6275;letter-spacing:0px;">team project, presenting findings to the class</div>
<div class="t" style="left:97px;top:710.96px;font-size:9.5px;line-height:1;font-weight:normal;font-style:normal;color:#5b6275;letter-spacing:0px;">and receiving the highest grade in the course</div>
<div class="t" style="left:359px;top:534.30px;font-size:15px;line-height:1;font-weight:bold;font-style:normal;color:#151a2a;letter-spacing:0.5px;">Relevant Courses</div>
<div class="a" style="left:364px;top:556px;width:3px;height:3px;border-radius:50%;background:#151a2a"></div><div class="t" style="left:372px;top:552.96px;font-size:9.5px;line-height:1;font-weight:normal;font-style:normal;color:#151a2a;letter-spacing:0px;">Web Development</div>
<div class="a" style="left:364px;top:566px;width:3px;height:3px;border-radius:50%;background:#151a2a"></div><div class="t" style="left:372px;top:562.96px;font-size:9.5px;line-height:1;font-weight:normal;font-style:normal;color:#151a2a;letter-spacing:0px;">Database Design and Management</div>
<div class="a" style="left:364px;top:576px;width:3px;height:3px;border-radius:50%;background:#151a2a"></div><div class="t" style="left:372px;top:572.96px;font-size:9.5px;line-height:1;font-weight:normal;font-style:normal;color:#151a2a;letter-spacing:0px;">Algorithms and Data</div>
<div class="a" style="left:364px;top:586px;width:3px;height:3px;border-radius:50%;background:#151a2a"></div><div class="t" style="left:372px;top:582.96px;font-size:9.5px;line-height:1;font-weight:normal;font-style:normal;color:#151a2a;letter-spacing:0px;">Structures</div>
<div class="a" style="left:364px;top:596px;width:3px;height:3px;border-radius:50%;background:#151a2a"></div><div class="t" style="left:372px;top:592.96px;font-size:9.5px;line-height:1;font-weight:normal;font-style:normal;color:#151a2a;letter-spacing:0px;">Artificial Intelligence</div>
<div class="t" style="left:359px;top:649.30px;font-size:15px;line-height:1;font-weight:bold;font-style:normal;color:#151a2a;letter-spacing:0.5px;">Professional Skills</div>
<div class="a" style="left:359px;top:690px;width:22px;height:22px;border-radius:50%;border:4px solid #232f55;border-right-color:#c9ccd6"></div><div class="t" style="left:359px;top:722.96px;font-size:9.5px;line-height:1;font-weight:normal;font-style:normal;color:#151a2a;letter-spacing:0px;">Adobe Illustrator   Microsoft Office Suite</div>
<div class="a" style="left:359px;top:745px;width:22px;height:22px;border-radius:50%;border:4px solid #232f55;border-right-color:#c9ccd6"></div>
</div>
</div>

<!-- thumb actions -->
<div class="a" style="left:89px;top:250px;width:80px;height:27px;background:#fff;border-radius:5px"></div>
<svg class="ic" style="left:89px;top:250px" width="80" height="27" viewBox="89 250 80 27" fill="none" stroke="#3d3d3d" stroke-width="1.1">
<rect x="100.5" y="257.6" width="8.2" height="8.6" rx="0.6"/>
<path d="M98.6 260.8H96.4V269.5H105.4V267.2" stroke-dasharray="1.6 1.2"/>
<path d="M128.5 258A6 6 0 0 0 122.5 264" />
<path d="M122.5 264A6 6 0 1 0 133.6 260.8" stroke-dasharray="1.5 1.4"/>
<path d="M134.2 257.2L133.8 261L130.3 260.2" stroke-width="1.2"/>
<path d="M149 260.2H161M152.8 260V257.8H157.2V260M150.3 260.5L151.2 269.4H158.8L159.7 260.5M153.3 262V268M155 262V268M156.7 262V268" />
</svg>
<div class="t" style="left:126.5px;top:280px;font-size:9px;color:#555;line-height:10px;font-family:'Liberation Serif',serif">1</div>
<!-- plus circle -->
<div class="a" style="left:119px;top:301px;width:19px;height:19px;border-radius:50%;background:#8db3f7"></div>
<svg class="ic" style="left:122px;top:304px" width="13" height="13" viewBox="0 0 13 13" fill="none" stroke="#fff" stroke-width="1.8"><path d="M6.5 1.5V11.5M1.5 6.5H11.5"/></svg>
<!-- dashed add box -->
<svg class="ic" style="left:81px;top:338px" width="96" height="135" viewBox="0 0 96 135"><rect x="0.5" y="0.5" width="95" height="134" rx="2" fill="none" stroke="#7ea6f0" stroke-width="1" stroke-dasharray="2.5 1.8"/></svg>
<svg class="ic" style="left:121px;top:381px" width="15" height="15" viewBox="0 0 15 15" fill="none" stroke="#86acf2" stroke-width="1"><circle cx="7.5" cy="7.5" r="6.8"/><path d="M7.5 3.5V11.5M3.5 7.5H11.5"/></svg>
<div class="a" style="left:81px;top:404px;width:96px;text-align:center;font-size:8.8px;line-height:9px;color:#6f9cf1;letter-spacing:-0.25px">Add <b>PDF</b>, <b>image</b>,<br><b>Word</b>, <b>Excel</b>, and<br><b>PowerPoint</b> files</div>

<!-- DROPDOWN -->
<div class="a" style="left:320px;top:120px;width:197px;height:128px;background:#fff;border-radius:4px;box-shadow:0 1px 4px rgba(0,0,0,0.12)"></div>
<div class="t" style="left:326px;top:130px;font-size:10px;font-weight:bold;color:#222;letter-spacing:-0.45px;line-height:11px">Signatures</div>
<div class="a" style="left:326px;top:150px;width:185px;height:31px;background:#e8e8e8;border-radius:3px"></div>
<svg class="ic" style="left:373px;top:158px" width="15" height="15" viewBox="0 0 15 15" fill="none" stroke="#333" stroke-width="1"><circle cx="7.5" cy="7.5" r="6.8"/><path d="M7.5 3.5V11.5M3.5 7.5H11.5"/></svg>
<div class="t" style="left:393px;top:160px;font-size:12px;color:#333;letter-spacing:-0.3px;line-height:13px">New signature</div>
<div class="t" style="left:326px;top:191px;font-size:10px;font-weight:bold;color:#222;letter-spacing:-0.2px;line-height:11px">Initials</div>
<div class="a" style="left:326px;top:212px;width:185px;height:30px;background:#fff;border:1px solid #e2e2e2;border-radius:3px"></div>
<svg class="ic" style="left:380px;top:219px" width="15" height="15" viewBox="0 0 15 15" fill="none" stroke="#333" stroke-width="1"><circle cx="7.5" cy="7.5" r="6.8"/><path d="M7.5 3.5V11.5M3.5 7.5H11.5"/></svg>
<div class="t" style="left:402px;top:221px;font-size:12px;color:#333;letter-spacing:-0.45px;line-height:13px">New initials</div>

<div class="a" style="left:359px;top:80px;width:119px;height:42px;border:3px solid #fbbf0c;border-radius:7px"></div>
<div class="a" style="left:619px;top:128px;width:2px;height:2px;border-radius:1px;background:#a8c2f5"></div>
<!-- PAGINATION -->
<div class="a" style="left:525px;top:608px;width:190px;height:30px;border-radius:15px;background:rgba(22,42,98,0.955)"></div>
<svg class="ic" style="left:542px;top:617px" width="7" height="12" viewBox="0 0 7 12" fill="none" stroke="#dde3ee" stroke-width="1.1"><path d="M6 1L1 6L6 11"/></svg>
<div class="a" style="left:560px;top:614px;width:25px;height:18px;border-radius:3px;background:rgba(255,255,255,0.2)"></div>
<div class="t" style="left:569px;top:617px;font-size:11.5px;color:#fff;line-height:12px">1</div>
<div class="t" style="left:587px;top:617px;font-size:11.5px;color:#fff;line-height:12px">/ 1</div>
<svg class="ic" style="left:612px;top:617px" width="7" height="12" viewBox="0 0 7 12" fill="none" stroke="#dde3ee" stroke-width="1.1"><path d="M1 1L6 6L1 11"/></svg>
<svg class="ic" style="left:635px;top:616px" width="14" height="14" viewBox="0 0 14 14" fill="none" stroke="#fff" stroke-width="1.1"><circle cx="7" cy="7" r="6.2"/><path d="M3.5 7H10.5"/></svg>
<svg class="ic" style="left:661px;top:616px" width="14" height="14" viewBox="0 0 14 14" fill="none" stroke="#fff" stroke-width="1.1"><circle cx="7" cy="7" r="6.2"/><path d="M3.5 7H10.5M7 3.5V10.5"/></svg>
<svg class="ic" style="left:686px;top:617px" width="15" height="12" viewBox="0 0 15 12" fill="none" stroke="#fff" stroke-width="1.1"><path d="M0.8 1V11M14.2 1V11M3 6H12M5 4L3 6L5 8M10 4L12 6L10 8"/></svg>

</body></html>
